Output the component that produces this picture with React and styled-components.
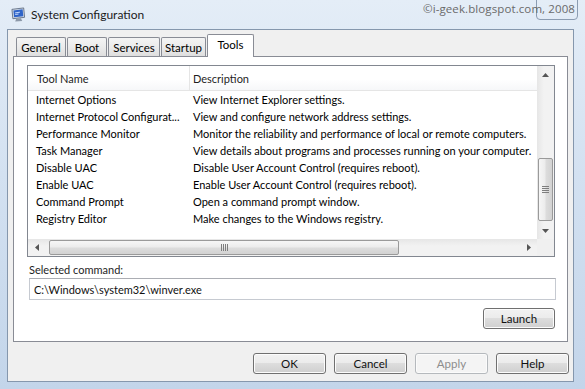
import React from "react";
import styled, { createGlobalStyle } from "styled-components";

const Global = createGlobalStyle`
  body {
    margin: 0;
    background: #fff;
    font-family: Lato, "Open Sans", sans-serif;
  }
`;

const Window = styled.div`
  width: 585px;
  height: 389px;
  position: relative;
  overflow: hidden;
  display: flex;
  flex-direction: column;
  background: linear-gradient(180deg, #e4edf7 0%, #d3e1f1 45%, #c3d5ea 100%);
  font-size: 11px;
  color: #000;
`;

const TitleBar = styled.div`
  height: 29px;
  display: flex;
  align-items: center;
  gap: 5px;
  padding-left: 11px;
  box-sizing: border-box;
`;

const Title = styled.span`
  font-size: 12px;
  color: #1b1b1b;
`;

const Watermark = styled.div`
  position: absolute;
  top: 1px;
  right: 10px;
  font-family: "Open Sans", sans-serif;
  font-size: 11.5px;
  color: #6a6a6a;
  letter-spacing: 0.1px;
`;

const CloseGhost = styled.div`
  position: absolute;
  top: -3px;
  right: 7px;
  width: 40px;
  height: 21px;
  border: 1px solid #8b9cb1;
  border-radius: 0 0 4px 4px;
`;

const Client = styled.div`
  flex: 1;
  margin: 0 11px 7px 7px;
  background: #f0f0f0;
  border: 1px solid #8597ad;
  display: flex;
  flex-direction: column;
  padding: 4px 5px 7px 5px;
  min-height: 0;
`;

const TabRow = styled.div`
  height: 23px;
  display: flex;
  align-items: flex-end;
  padding-left: 3px;
  margin-bottom: -1px;
  position: relative;
  z-index: 1;
`;

const Tab = styled.div`
  box-sizing: border-box;
  width: ${(p) => p.$w}px;
  height: ${(p) => (p.$active ? 23 : 19)}px;
  margin: ${(p) => (p.$active ? "0 -1px 0 0" : "0 0 1px 0")};
  border: 1px solid #898c95;
  border-bottom: none;
  border-radius: 2px 2px 0 0;
  background: ${(p) =>
    p.$active ? "#fff" : "linear-gradient(180deg, #f4f4f4 0%, #ebebeb 50%, #dedede 100%)"};
  display: flex;
  align-items: center;
  justify-content: center;
  font-size: 11.5px;
  padding-bottom: ${(p) => (p.$active ? 4 : 0)}px;
  & + & {
    margin-left: 1px;
  }
`;

const Pane = styled.div`
  flex: 1;
  min-height: 0;
  background: #fff;
  border: 1px solid #898c95;
  padding: 8px 12px 12px 13px;
  display: flex;
  flex-direction: column;
`;

const ListView = styled.div`
  height: 192px;
  box-sizing: border-box;
  border: 1px solid #828790;
  display: grid;
  grid-template-columns: 1fr 17px;
  grid-template-rows: 1fr 17px;
`;

const ListBody = styled.div`
  overflow: hidden;
  min-width: 0;
`;

const HeaderRow = styled.div`
  height: 25px;
  box-sizing: border-box;
  display: flex;
  border-bottom: 1px solid #e5e5e5;
  background: linear-gradient(180deg, #ffffff 0%, #ffffff 55%, #f6f7f9 100%);
`;

const HeaderCell = styled.div`
  width: ${(p) => (p.$w ? `${p.$w}px` : "auto")};
  flex: ${(p) => (p.$w ? "none" : 1)};
  box-sizing: border-box;
  display: flex;
  align-items: center;
  padding-left: ${(p) => p.$pl}px;
  border-right: ${(p) => (p.$w ? "1px solid #e5e5e5" : "none")};
  white-space: nowrap;
  color: #1e1e1e;
`;

const Row = styled.div`
  height: 17px;
  display: flex;
  align-items: center;
  white-space: nowrap;
`;

const Cell = styled.div`
  width: ${(p) => (p.$w ? `${p.$w}px` : "auto")};
  flex: ${(p) => (p.$w ? "none" : 1)};
  box-sizing: border-box;
  padding-left: ${(p) => p.$pl}px;
  overflow: hidden;
`;

const VScroll = styled.div`
  background: linear-gradient(90deg, #e6e6e6 0%, #f2f2f2 40%, #f2f2f2 100%);
  display: flex;
  flex-direction: column;
`;

const HScroll = styled.div`
  background: linear-gradient(180deg, #e6e6e6 0%, #f2f2f2 40%, #f2f2f2 100%);
  display: flex;
`;

const Corner = styled.div`
  background: #f0f0f0;
`;

const Arrow = styled.div`
  width: 17px;
  height: 17px;
  flex: none;
  display: flex;
  align-items: center;
  justify-content: center;
`;

const VTrack = styled.div`
  flex: 1;
  display: flex;
  flex-direction: column;
  justify-content: flex-end;
  padding: 0 1px 1px 1px;
`;

const HTrack = styled.div`
  flex: 1;
  display: flex;
  padding: 1px 0 1px 4px;
`;

const Thumb = styled.div`
  box-sizing: border-box;
  border: 1px solid #9a9a9a;
  border-radius: 2px;
  display: flex;
  align-items: center;
  justify-content: center;
  background: ${(p) =>
    p.$vertical
      ? "linear-gradient(90deg, #f6f6f6 0%, #ececec 45%, #dcdcdc 55%, #d2d2d2 100%)"
      : "linear-gradient(180deg, #f6f6f6 0%, #ececec 45%, #dcdcdc 55%, #d2d2d2 100%)"};
  height: ${(p) => (p.$vertical ? "63px" : "auto")};
  width: ${(p) => (p.$vertical ? "auto" : "350px")};
`;

const Label = styled.div`
  margin-top: 5px;
  height: 15px;
  line-height: 15px;
  padding-left: 2px;
  color: #1e1e1e;
`;

const TextBox = styled.div`
  margin: 1px -1px 0 2px;
  height: 22px;
  box-sizing: border-box;
  border: 1px solid #c6cad1;
  border-top-color: #abadb3;
  display: flex;
  align-items: center;
  padding-left: 4px;
  color: #111;
`;

const Button = styled.div`
  box-sizing: border-box;
  width: ${(p) => p.$w || 73}px;
  height: 21px;
  border: 1px solid ${(p) => (p.$disabled ? "#b5b9bd" : "#707070")};
  border-radius: 3px;
  display: flex;
  align-items: center;
  justify-content: center;
  font-size: 11.5px;
  color: ${(p) => (p.$disabled ? "#8d8d8d" : "#111")};
  background: ${(p) =>
    p.$disabled
      ? "#f4f4f4"
      : "linear-gradient(180deg, #f2f2f2 0%, #ebebeb 49%, #dddddd 50%, #cfcfcf 100%)"};
  box-shadow: inset 0 0 0 1px ${(p) => (p.$disabled ? "#fbfbfb" : "#fcfcfc")};
`;

const LaunchRow = styled.div`
  margin-top: 8px;
  display: flex;
  justify-content: flex-end;
`;

const Footer = styled.div`
  padding-top: 11px;
  display: flex;
  justify-content: flex-end;
  gap: 8px;
  margin-right: -1px;
`;

const Tri = ({ dir }) => {
  const pts = {
    up: "0,4 3.5,0 7,4",
    down: "0,0 3.5,4 7,0",
    left: "4,0 0,3.5 4,7",
    right: "0,0 4,3.5 0,7",
  }[dir];
  const vert = dir === "up" || dir === "down";
  return (
    <svg width={vert ? 7 : 4} height={vert ? 4 : 7} viewBox={vert ? "0 0 7 4" : "0 0 4 7"}>
      <polygon points={pts} fill="#555" />
    </svg>
  );
};

const Grip = ({ vertical }) => (
  <svg width={7} height={7} viewBox="0 0 7 7">
    {[0, 2, 4, 6].map((i) =>
      vertical ? (
        <rect key={i} x={0} y={i} width={7} height={1} fill="#7d7d7d" />
      ) : (
        <rect key={i} x={i} y={0} width={1} height={7} fill="#7d7d7d" />
      )
    )}
  </svg>
);

const AppIcon = () => (
  <svg width="15" height="15" viewBox="0 0 16 16">
    <path d="M1 2.5 L13.5 1 L14.5 11 L2 12.5 Z" fill="#d6dde6" stroke="#56667c" strokeWidth="0.9" />
    <path d="M2.6 3.6 L12.4 2.5 L13.1 9.8 L3.3 10.9 Z" fill="#2f64c8" />
    <path d="M4.3 6.3 L9.5 5.5 M4.5 8 L8 7.5" stroke="#cfe0ff" strokeWidth="1" />
    <path d="M5.5 12.6 L10.5 12 L12 15 L4.5 15.5 Z" fill="#8c98a8" />
  </svg>
);

const tools = [
  ["Internet Options", "View Internet Explorer settings."],
  ["Internet Protocol Configurat...", "View and configure network address settings."],
  ["Performance Monitor", "Monitor the reliability and performance of local or remote computers."],
  ["Task Manager", "View details about programs and processes running on your computer."],
  ["Disable UAC", "Disable User Account Control (requires reboot)."],
  ["Enable UAC", "Enable User Account Control (requires reboot)."],
  ["Command Prompt", "Open a command prompt window."],
  ["Registry Editor", "Make changes to the Windows registry."],
];

const tabs = [
  ["General", 50],
  ["Boot", 40],
  ["Services", 52],
  ["Startup", 45],
  ["Tools", 47, true],
];

export default function App() {
  return (
    <>
      <Global />
      <Window>
        <TitleBar>
          <AppIcon />
          <Title>System Configuration</Title>
        </TitleBar>
        <CloseGhost />
        <Watermark>©i-geek.blogspot.com, 2008</Watermark>
        <Client>
          <TabRow>
            {tabs.map(([name, w, active]) => (
              <Tab key={name} $w={w} $active={active}>
                {name}
              </Tab>
            ))}
          </TabRow>
          <Pane>
            <ListView>
              <ListBody>
                <HeaderRow>
                  <HeaderCell $w={162} $pl={9}>
                    Tool Name
                  </HeaderCell>
                  <HeaderCell $pl={3}>Description</HeaderCell>
                </HeaderRow>
                {tools.map(([name, desc]) => (
                  <Row key={name}>
                    <Cell $w={162} $pl={8}>
                      {name}
                    </Cell>
                    <Cell $pl={3}>{desc}</Cell>
                  </Row>
                ))}
              </ListBody>
              <VScroll>
                <Arrow>
                  <Tri dir="up" />
                </Arrow>
                <VTrack>
                  <Thumb $vertical>
                    <Grip vertical />
                  </Thumb>
                </VTrack>
                <Arrow>
                  <Tri dir="down" />
                </Arrow>
              </VScroll>
              <HScroll>
                <Arrow>
                  <Tri dir="left" />
                </Arrow>
                <HTrack>
                  <Thumb>
                    <Grip />
                  </Thumb>
                </HTrack>
                <Arrow>
                  <Tri dir="right" />
                </Arrow>
              </HScroll>
              <Corner />
            </ListView>
            <Label>Selected command:</Label>
            <TextBox>C:\Windows\system32\winver.exe</TextBox>
            <LaunchRow>
              <Button $w={72}>Launch</Button>
            </LaunchRow>
          </Pane>
          <Footer>
            <Button>OK</Button>
            <Button>Cancel</Button>
            <Button $disabled>Apply</Button>
            <Button>Help</Button>
          </Footer>
        </Client>
      </Window>
    </>
  );
}
